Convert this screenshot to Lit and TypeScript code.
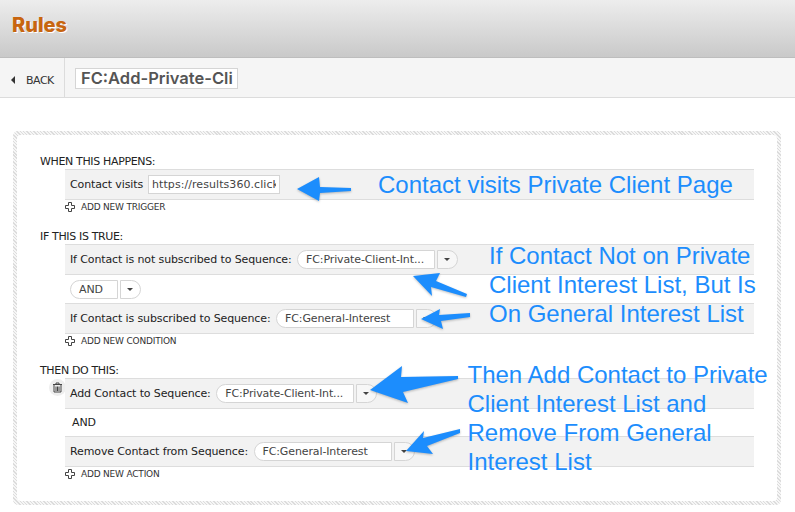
import { LitElement, html, css, svg } from "lit";
import { customElement } from "lit/decorators.js";

const plus = html`<svg class="plus" width="10" height="10" viewBox="0 0 10 10"><path d="M3.5.5h3v3h3v3h-3v3h-3v-3h-3v-3h3z" fill="#fff" stroke="#444" stroke-width="1"/></svg>`;

const arrows = [
  "M297 189L319 177L320 187L351 188L351 191L320 193L319 201Z",
  "M413 276L440 273L436 281L467 294L466 297L431 287L432 296Z",
  "M421 319L440 309L439 315L470 313L470 317L441 321L443 329Z",
  "M370 390L402 366L401 377L458 376L458 379L403 392L408 403Z",
  "M406 451L424 431L423 438L460 429L460 433L427 446L433 454Z",
];

@customElement("app-root")
export class AppRoot extends LitElement {
  static styles = css`
    :host { display: block; position: relative; width: 795px; height: 512px; overflow: hidden; background: #fff;
      font-family: "DejaVu Sans", sans-serif; font-size: 11px; color: #333; }
    .top { box-sizing: border-box; padding: 12px 0 0 12px; border-bottom: 1px solid #bdbdbd;
      background: linear-gradient(#ededed, #c9c9c9); height: 58px; }
    .top h1 { margin: 0; font: 800 20px/26px Inter, sans-serif; color: #c8650f; text-shadow: 1px 1px 0 #fff; }
    .sub { display: flex; height: 39px; background: #f5f5f5; border-bottom: 1px solid #dcdcdc; }
    .back { width: 65px; box-sizing: border-box; display: flex; align-items: center; padding: 5px 0 0 11px; gap: 11px;
      border-right: 1px solid #dcdcdc; font: 11px "DejaVu Sans", sans-serif; letter-spacing: -.5px; color: #333; }
    .tri { width: 0; height: 0; border: 4px solid transparent; border-right: 4px solid #333; border-left: 0; }
    .name { margin: 10px 0 0 10px; width: 163px; height: 21px; box-sizing: border-box; background: #fff; border: 1px solid #d5d5d5;
      font: 600 16.5px/19px Inter, sans-serif; color: #555; padding-left: 5px; overflow: hidden; white-space: nowrap; }
    .card { margin: 33px 14px 0 13px; height: 374px; box-sizing: border-box; padding: 4px; border-radius: 5px;
      background: repeating-linear-gradient(45deg, #dcdcdc 0 1px, #f6f6f6 1px 2.4px); }
    .inner { height: 100%; box-sizing: border-box; background: #fff; border-radius: 4px; padding: 20px 23px 0 23px; }
    .sec { position: relative; }
    .sec.s2, .sec.s3 { margin-top: 16px; }
    .head { line-height: 14px; height: 14px; font-size: 11px; color: #222; letter-spacing: -.35px; }
    .rows { margin-left: 25px; position: relative; }
    .row { height: 31px; box-sizing: border-box; background: #f2f2f2; border-top: 1px solid #ddd; border-bottom: 1px solid #ddd;
      display: flex; align-items: center; padding-left: 5px; letter-spacing: -.12px; white-space: nowrap; color: #222; }
    .and { height: 28px; display: flex; align-items: center; padding-left: 5px; letter-spacing: -.1px; }
    .and.plain { height: 27px; padding-left: 7px; color: #222; }
    .sel { height: 19px; box-sizing: border-box; background: #fff; border: 1px solid #d5d5d5; border-radius: 10px 0 0 10px;
      line-height: 17px; padding-left: 8px; width: 138px; color: #444; overflow: hidden; }
    .and .sel { width: 48px; }
    .btn { position: relative; height: 19px; width: 21px; box-sizing: border-box; background: #fff; border: 1px solid #d5d5d5; border-radius: 0 10px 10px 0; margin-left: 2px; }
    .row .btn { background: #f7f7f7; }
    .btn::after { content: ""; position: absolute; left: 6px; top: 7px; border: 3px solid transparent; border-top: 3px solid #444; border-bottom: 0; }
    .inp { height: 19px; width: 132px; box-sizing: border-box; background: #fff; border: 1px solid #d5d5d5; margin-left: 5px; padding: 0 3px;
      line-height: 17px; color: #444; letter-spacing: .07px; }
    .inp span { display: block; overflow: hidden; }
    .add { height: 14px; display: flex; align-items: center; gap: 6px; font-size: 9px; color: #333; letter-spacing: -.2px; }
    .plus { flex: none; }
    .lbl { margin-right: 5.5px; }
    .trash { position: absolute; left: 9px; top: 15px; width: 17px; height: 17px; border-radius: 50%; background: #eee; display: flex; align-items: center; justify-content: center; }
    .arrows { position: absolute; inset: 0; pointer-events: none; filter: drop-shadow(0 1px 1px rgba(0,0,0,.25)); }
    .arrows path { fill: #1c8dfd; }
    .note { position: absolute; font: 24px/29px "Liberation Sans", Arial, sans-serif; color: #1c8dfd; white-space: nowrap; }
    .n1 { left: 378px; top: 170px; }
    .n2 { left: 489px; top: 241px; }
    .n3 { left: 467.5px; top: 360px; }
  `;

  sel(t: string) {
    return html`<div class="sel">${t}</div><div class="btn"></div>`;
  }

  render() {
    return html`
      <div class="top"><h1>Rules</h1></div>
      <div class="sub">
        <div class="back"><span class="tri"></span>BACK</div>
        <div class="name">FC:Add-Private-Cli</div>
      </div>
      <div class="card"><div class="inner">
        <div class="sec">
          <div class="head">WHEN THIS HAPPENS:</div>
          <div class="rows">
            <div class="row">Contact visits<div class="inp"><span>https://results360.click</span></div></div>
            <div class="add">${plus}ADD NEW TRIGGER</div>
          </div>
        </div>
        <div class="sec s2">
          <div class="head">IF THIS IS TRUE:</div>
          <div class="rows">
            <div class="row"><span class="lbl">If Contact is not subscribed to Sequence:</span>${this.sel("FC:Private-Client-Int...")}</div>
            <div class="and"><div class="sel">AND</div><div class="btn"></div></div>
            <div class="row"><span class="lbl">If Contact is subscribed to Sequence:</span>${this.sel("FC:General-Interest")}</div>
            <div class="add">${plus}ADD NEW CONDITION</div>
          </div>
        </div>
        <div class="sec s3">
          <div class="head">THEN DO THIS:</div>
          <div class="trash"><svg width="11" height="11" viewBox="0 0 11 11" fill="none" stroke="#444"><path d="M1 2.500h9M4 2.500v-1.500h3v1.500M2 3v7h7V3M4 4.500V9M5.500 4.500V9M7 4.500V9"/></svg></div>
          <div class="rows">
            <div class="row"><span class="lbl">Add Contact to Sequence:</span>${this.sel("FC:Private-Client-Int...")}</div>
            <div class="and plain">AND</div>
            <div class="row"><span class="lbl">Remove Contact from Sequence:</span>${this.sel("FC:General-Interest")}</div>
            <div class="add">${plus}ADD NEW ACTION</div>
          </div>
        </div>
      </div></div>
      <svg class="arrows" width="795" height="512" viewBox="0 0 795 512">
        ${arrows.map((d) => svg`<path d=${d} />`)}
      </svg>
      <div class="note n1">Contact visits Private Client Page</div>
      <div class="note n2">If Contact Not on Private<br>Client Interest List, But Is<br>On General Interest List</div>
      <div class="note n3">Then Add Contact to Private<br>Client Interest List and<br>Remove From General<br>Interest List</div>
    `;
  }
}
